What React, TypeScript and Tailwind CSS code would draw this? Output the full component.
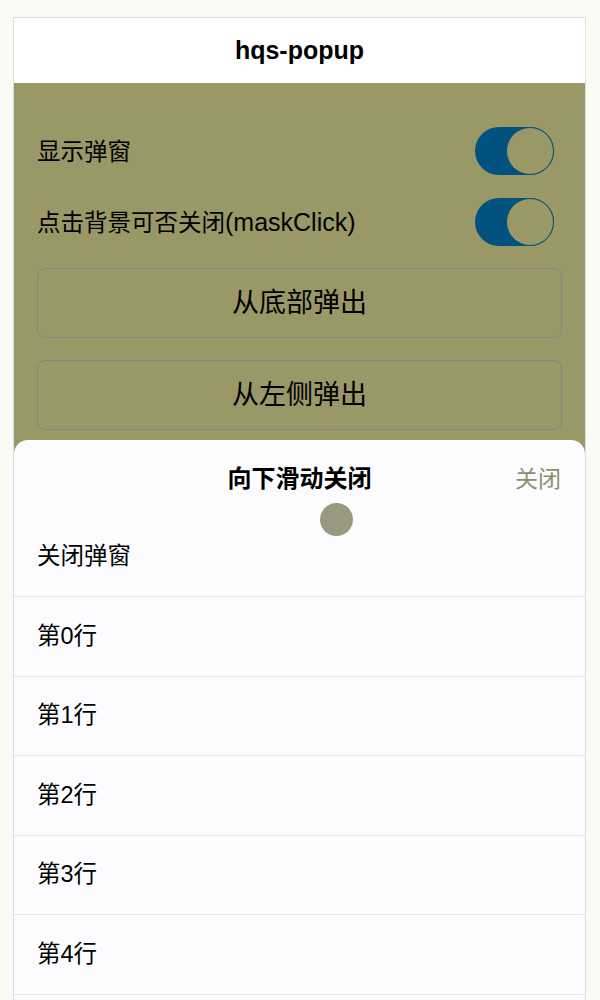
const font = { fontFamily: '"Liberation Sans", "Noto Sans CJK SC", sans-serif' }

const rows = ['第0行', '第1行', '第2行', '第3行', '第4行']

function Toggle() {
  return (
    <div className="relative w-[79px] h-[48px] rounded-full bg-[#02527f]">
      <div className="absolute right-0 top-0 w-[48px] h-[48px] rounded-full bg-[#999866] border-[1.5px] border-[#02527f]" />
    </div>
  )
}

export default function App() {
  return (
    <div className="w-[600px] h-[1000px] overflow-hidden bg-[#fbfbf6] pt-[17px] pl-[13px] pr-[14px]" style={font}>
      <div className="relative h-[1100px] border border-[#dcdce6] bg-white">
        <header className="h-[65px] flex items-center justify-center text-[25px] font-bold text-black">
          hqs-popup
        </header>

        <div className="h-[1035px] bg-[#999866] px-[23px] pt-[44px]">
          <div className="flex items-center justify-between pr-[8px] h-[48px]">
            <span className="text-[23.5px] text-black pt-[3px]">显示弹窗</span>
            <Toggle />
          </div>
          <div className="flex items-center justify-between pr-[8px] h-[48px] mt-[23px]">
            <span className="text-[23.5px] text-black pt-[1px]">
              点击背景可否关闭<span className="text-[25px]">(maskClick)</span>
            </span>
            <Toggle />
          </div>
          <button className="mt-[22px] w-full h-[70px] rounded-[8px] border border-[#85867c] text-[27px] text-black">
            从底部弹出
          </button>
          <button className="mt-[22px] w-full h-[70px] rounded-[8px] border border-[#85867c] text-[27px] text-black">
            从左侧弹出
          </button>
        </div>

        {/* bottom popup sheet */}
        <div className="absolute left-0 right-0 top-[422px] bottom-0 rounded-t-[14px] bg-[#fcfcff]">
          <div className="relative h-[78px] flex items-center justify-center">
            <span className="text-[24px] font-bold text-black">向下滑动关闭</span>
            <span className="absolute right-[24px] text-[23px] text-[#8f8d70]">关闭</span>
          </div>
          <div className="absolute left-[306px] top-[63px] w-[33px] h-[33px] rounded-full bg-[#999880]" />
          <div className="h-[79px] flex items-center px-[23px] border-b border-[#e8e8d8] text-[23.5px] text-black">
            关闭弹窗
          </div>
          {rows.map((r) => (
            <div key={r} className="h-[79.6px] flex items-center px-[23px] border-b border-[#e8e8d8] text-[23.5px] text-black">
              {r}
            </div>
          ))}
        </div>
      </div>
    </div>
  )
}
